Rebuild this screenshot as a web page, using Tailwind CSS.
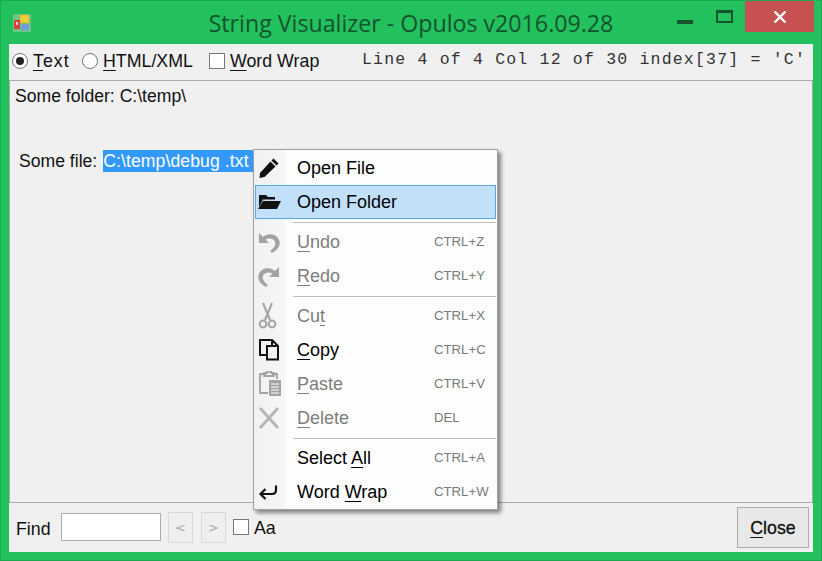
<!DOCTYPE html>
<html>
<head>
<meta charset="utf-8">
<script src="https://cdn.jsdelivr.net/npm/@tailwindcss/browser@4"></script>
</head>
<body class="m-0 overflow-hidden">
<div class="relative w-[822px] h-[561px] bg-[#22c15d] border border-[#1ba84f] flex flex-col font-['Liberation_Sans',sans-serif] text-black">
  <!-- title bar -->
  <div class="h-[43px] shrink-0 grid grid-cols-[1fr_auto_1fr] relative">
    <div class="flex items-start pl-[12px] pt-[13px]">
      <svg width="18" height="18" viewBox="0 0 18 18"><rect width="18" height="18" fill="#6fc48a"/><rect x="7" y="1" width="9" height="8" fill="#f2cf3a" stroke="#c9a227" stroke-width=".5"/><rect x="1" y="6" width="6" height="9" fill="#d9403a"/><rect x="3" y="8" width="2" height="3" fill="#f5d0c8"/><rect x="8" y="10" width="8" height="6" fill="#6f9fd8"/></svg>
    </div>
    <div class="font-['Open_Sans',sans-serif] text-[#14532d] text-[23.2px] leading-[30px] pt-[7px] whitespace-nowrap">String Visualizer - Opulos v2016.09.28</div>
    <div class="flex justify-end items-start pr-[7px]">
      <div class="w-[16px] h-[4px] bg-[#14532d] mt-[18.5px] mr-[23px]"></div>
      <div class="w-[17px] h-[13px] border-2 border-t-[3px] border-[#14532d] mt-[9px] mr-[12px]"></div>
      <div class="w-[69px] h-[31px] bg-[#c75050] flex items-center justify-center">
        <svg width="14" height="12" viewBox="0 0 14 12"><path d="M1.5 .5 L12.5 11.5 M12.5 .5 L1.5 11.5" stroke="#fff" stroke-width="2.4"/></svg>
      </div>
    </div>
  </div>
  <!-- client -->
  <div class="relative flex-1 mx-[8px] mb-[8px] bg-[#f0f0f0] flex flex-col min-h-0">
    <!-- toolbar -->
    <div class="h-[36px] shrink-0 flex items-center pl-[3px] pr-[7px] pb-[2px] text-[17.8px] text-[#111]">
      <span class="w-[16px] h-[16px] rounded-full border border-[#777] bg-white flex items-center justify-center"><span class="w-[8px] h-[8px] rounded-full bg-[#222]"></span></span>
      <span class="ml-[5px] w-[49px] tracking-[1px]"><span class="underline underline-offset-[3px]">T</span>ext</span>
      <span class="w-[16px] h-[16px] rounded-full border border-[#777] bg-white"></span>
      <span class="ml-[5px] w-[106px]"><span class="underline underline-offset-[3px]">H</span>TML/XML</span>
      <span class="w-[16px] h-[16px] border border-[#777] bg-white"></span>
      <span class="ml-[5px]"><span class="underline underline-offset-[3px]">W</span>ord Wrap</span>
      <span class="ml-auto font-['Liberation_Mono',monospace] text-[16.5px] tracking-[1.2px] text-[#333] whitespace-pre -translate-y-px">Line 4 of 4 Col 12 of 30 index[37] = 'C'</span>
    </div>
    <!-- text area -->
    <div class="flex-1 min-h-0 border border-[#a9a9a9] pl-[5px] text-[17.6px] leading-[22px] text-[#111]">
      <div class="pt-[4px] h-[69px]">Some folder: C:\temp\</div>
      <div class="pl-[4px] flex"><span>Some file:&nbsp;</span><span class="bg-[#3399ff] text-white w-[150px] ml-px tracking-[.1px]">C:\temp\debug .txt</span></div>
    </div>
    <!-- bottom bar -->
    <div class="h-[49px] shrink-0 flex items-start pl-[7px] pr-[4px] text-[17.8px] text-[#111]">
      <span class="mt-[13px] w-[45px]">Find</span>
      <span class="mt-[10px] w-[100px] h-[28px] border border-[#adadad] bg-white"></span>
      <span class="mt-[9px] ml-[7px] w-[25px] h-[31px] border border-[#d9d9d9] bg-[#efefef] text-[#a8a8a8] flex items-center justify-center font-['DejaVu_Sans',sans-serif] text-[13px]">&lt;</span>
      <span class="mt-[9px] ml-[8px] w-[25px] h-[31px] border border-[#d9d9d9] bg-[#efefef] text-[#a8a8a8] flex items-center justify-center font-['DejaVu_Sans',sans-serif] text-[13px]">&gt;</span>
      <span class="mt-[16px] ml-[7px] w-[16px] h-[16px] border border-[#777] bg-white"></span>
      <span class="mt-[12px] ml-[5px]">Aa</span>
      <span class="ml-auto mt-[4px] w-[72px] h-[41px] border border-[#adadad] bg-[#e8e8e8] flex items-center justify-center pt-[2px] text-[17.8px] font-medium [-webkit-text-stroke:0.3px_#111]"><span><span class="underline underline-offset-[3px]">C</span>lose</span></span>
    </div>
    <!-- context menu -->
    <div class="absolute left-[244px] top-[105px] w-[245px] h-[361px] border border-[#a0a0a0] bg-[#fdfdfd] shadow-[3px_3px_4px_rgba(0,0,0,.45)] text-[18px] flex flex-col pt-px">
      <div class="absolute left-0 top-0 bottom-0 w-[31px] bg-gradient-to-r from-[#f1f1f1] to-[#f6f6f6]"></div>
      <div class="relative flex flex-col">
        <div class="h-[34px] flex items-center"><span class="w-[31px] flex pl-[4px]"><svg width="22" height="22" viewBox="0 0 22 22"><path d="M15.5 1.5 L20.5 6.5 L18.5 8.5 L13.5 3.5 Z M12.5 4.5 L17.5 9.5 L6.5 20 L1.5 21 L2 16 Z" fill="#111"/></svg></span><span class="ml-[12px]">Open File</span></div>
        <div class="h-[34px] flex items-center bg-[#c3e0fb] border border-[#5da7e0] mx-px"><span class="w-[29px] flex pl-[2px]"><svg width="24" height="18" viewBox="0 0 24 18"><path d="M1 14 L1 2 L8 2 L10 4 L17 4 L17 6.5 L5 6.5 Z M0 16 L5 8 L23 8 L19 16 Z" fill="#111"/></svg></span><span class="ml-[12px]">Open Folder</span></div>
        <div class="h-[6px] flex items-center pl-[39px] pr-px"><div class="h-px flex-1 bg-[#c0c0c0]"></div></div>
        <div class="h-[34px] flex items-center text-[#7d7d7d]"><span class="w-[31px] flex pl-[3px]"><svg width="24" height="24" viewBox="0 0 24 24"><path d="M2 3 L2 13 L12 13 L8.5 9.5 C12 7.5 17 8.5 18 12 C19 15 17 18 13 21 L15 23 C21 20 23.5 15 22.5 11 C20.5 4 12 2 6 7 Z" fill="#a3a3a3"/></svg></span><span class="ml-[12px] w-[137px]"><span class="underline underline-offset-[3px]">U</span>ndo</span><span class="text-[13.2px] text-[#7a7a7a]">CTRL+Z</span></div>
        <div class="h-[34px] flex items-center text-[#7d7d7d]"><span class="w-[31px] flex pl-[3px]"><svg width="24" height="24" viewBox="0 0 24 24"><path d="M22 3 L22 13 L12 13 L15.5 9.5 C12 7.5 7 8.5 6 12 C5 15 7 18 11 21 L9 23 C3 20 .5 15 1.5 11 C3.5 4 12 2 18 7 Z" fill="#a3a3a3"/></svg></span><span class="ml-[12px] w-[137px]"><span class="underline underline-offset-[3px]">R</span>edo</span><span class="text-[13.2px] text-[#7a7a7a]">CTRL+Y</span></div>
        <div class="h-[6px] flex items-center pl-[39px] pr-px"><div class="h-px flex-1 bg-[#c0c0c0]"></div></div>
        <div class="h-[34px] flex items-center text-[#7d7d7d]"><span class="w-[31px] flex pl-[4px]"><svg width="20" height="28" viewBox="0 0 20 28"><path d="M5 1 L12 18 M14 1 L7 18" stroke="#a3a3a3" stroke-width="2" fill="none"/><circle cx="5" cy="22" r="3.4" stroke="#a3a3a3" stroke-width="2" fill="none"/><circle cx="14" cy="22" r="3.4" stroke="#a3a3a3" stroke-width="2" fill="none"/></svg></span><span class="ml-[12px] w-[137px]">Cu<span class="underline underline-offset-[3px]">t</span></span><span class="text-[13.2px] text-[#7a7a7a]">CTRL+X</span></div>
        <div class="h-[34px] flex items-center"><span class="w-[31px] flex pl-[4px]"><svg width="22" height="22" viewBox="0 0 22 22"><path d="M8 1 L14 1 L20 7 L20 20.5 L9 20.5 L9 7 L14 7 M8 16 L2 16 L2 1 L8 1 M14 1 L14 7 L20 7" stroke="#111" stroke-width="2" fill="none"/></svg></span><span class="ml-[12px] w-[137px]"><span class="underline underline-offset-[3px]">C</span>opy</span><span class="text-[13.2px] text-[#7a7a7a]">CTRL+C</span></div>
        <div class="h-[34px] flex items-center text-[#7d7d7d]"><span class="w-[31px] flex pl-[4px]"><svg width="24" height="26" viewBox="0 0 24 26"><path d="M8 3 L2 3 L2 22 L10 22 M14 3 L19 3 L19 8 M6 5 L6 2 L9 2 L9 0.5 L13 0.5 L13 2 L16 2 L16 5 Z" stroke="#a3a3a3" stroke-width="1.8" fill="none"/><rect x="11" y="9" width="12" height="16" fill="#a3a3a3"/><path d="M13 13 L21 13 M13 16 L21 16 M13 19 L21 19 M13 22 L21 22" stroke="#fdfdfd" stroke-width="1"/></svg></span><span class="ml-[12px] w-[137px]"><span class="underline underline-offset-[3px]">P</span>aste</span><span class="text-[13.2px] text-[#7a7a7a]">CTRL+V</span></div>
        <div class="h-[34px] flex items-center text-[#7d7d7d]"><span class="w-[31px] flex pl-[4px]"><svg width="22" height="22" viewBox="0 0 22 22"><path d="M2 1 L20 21 M20 1 L2 21" stroke="#b5b5b5" stroke-width="2.8"/></svg></span><span class="ml-[12px] w-[137px]"><span class="underline underline-offset-[3px]">D</span>elete</span><span class="text-[13.2px] text-[#7a7a7a]">DEL</span></div>
        <div class="h-[6px] flex items-center pl-[39px] pr-px"><div class="h-px flex-1 bg-[#c0c0c0]"></div></div>
        <div class="h-[34px] flex items-center"><span class="w-[31px]"></span><span class="ml-[12px] w-[137px]">Select <span class="underline underline-offset-[3px]">A</span>ll</span><span class="text-[13.2px] text-[#7a7a7a]">CTRL+A</span></div>
        <div class="h-[34px] flex items-center"><span class="w-[31px] flex pl-[4px]"><svg width="20" height="16" viewBox="0 0 20 16"><path d="M18 1.5 L18 6 C18 8.5 16.5 10 14 10 L3 10 M7.5 5 L2.5 10 L7.5 15" stroke="#111" stroke-width="2.2" fill="none"/></svg></span><span class="ml-[12px] w-[137px]">Word <span class="underline underline-offset-[3px]">W</span>rap</span><span class="text-[13.2px] text-[#7a7a7a]">CTRL+W</span></div>
      </div>
    </div>
  </div>
</div>
</body>
</html>
